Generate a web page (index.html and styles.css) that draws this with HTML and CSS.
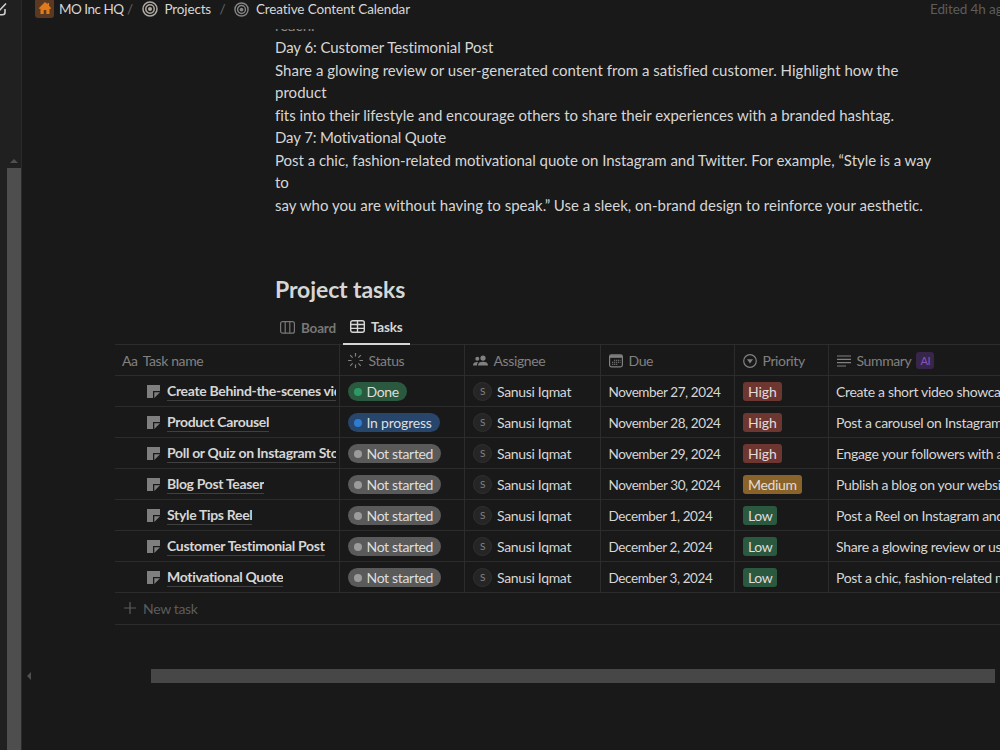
FILE: index.html
```html
<!DOCTYPE html>
<html lang="en">
<head>
<meta charset="utf-8">
<title>Creative Content Calendar</title>
<link rel="stylesheet" href="styles.css">
</head>
<body>
<svg class="defs" width="0" height="0">
  <symbol id="target" viewBox="0 0 16 16"><g fill="none" stroke="currentColor" stroke-width="1.5"><circle cx="8" cy="8" r="7"/><circle cx="8" cy="8" r="4.2"/></g><circle cx="8" cy="8" r="2" fill="currentColor"/></symbol>
  <symbol id="page" viewBox="0 0 13 13"><path fill="currentColor" d="M0 0h13v6H6v7H0zM7.3 7.300H13L7.300 13z"/></symbol>
</svg>
<div class="app">
  <aside class="sidebar">
    <svg class="compose" width="8" height="18" viewBox="0 0 8 18"><path d="M0 14.800h2.500q2.500 0 2.500-2.500V9M-1 11L6 3.500" fill="none" stroke="#d0d0d0" stroke-width="1.600"/></svg>
    <div class="scroll-v"><i class="arrow-up"></i><div class="thumb-v"></div></div>
  </aside>
  <main class="main">
    <header class="topbar">
      <span class="home"><svg width="12" height="12" viewBox="0 0 12 12"><path fill="#e07b1c" d="M6 0l2.500 2.300V1H10v2.700L12 6v.7h-1.500V12H7.300V8H4.700v4H1.500V6.700H0V6z"/></svg></span>
      <span class="crumb c1">MO Inc HQ</span><span class="slash s1">/</span>
      <svg class="tgt t1" width="16" height="16"><use href="#target"/></svg><span class="crumb c2">Projects</span><span class="slash s2">/</span>
      <svg class="tgt t2" width="15" height="15"><use href="#target"/></svg><span class="crumb c3">Creative Content Calendar</span>
      <span class="edited">Edited 4h ago</span>
    </header>
    <div class="doc">
      <div class="prose">
        <p>reach.</p>
        <p class="p1">Day 6: Customer Testimonial Post</p>
        <p class="p2">Share a glowing review or user-generated content from a satisfied customer. Highlight how the<br>product</p>
        <p class="p3">fits into their lifestyle and encourage others to share their experiences with a branded hashtag.</p>
        <p class="p4">Day 7: Motivational Quote</p>
        <p class="p5">Post a chic, fashion-related motivational quote on Instagram and Twitter. For example, “Style is a way<br>to</p>
        <p class="p6">say who you are without having to speak.” Use a sleek, on-brand design to reinforce your aesthetic.</p>
      </div>
      <h2>Project tasks</h2>
      <nav class="tabs">
        <span class="tab"><svg width="15" height="13" viewBox="0 0 15 13"><g fill="none" stroke="currentColor" stroke-width="1.200"><rect x=".6" y=".6" width="13.800" height="11.600" rx="2"/><path d="M5.200.6v11.600M9.800.6v11.600"/></g></svg>Board</span>
        <span class="tab active"><svg width="15" height="13" viewBox="0 0 15 13"><g fill="none" stroke="currentColor" stroke-width="1.400"><rect x=".7" y=".7" width="13.600" height="11.600" rx="2"/><path d="M.7 4.500h13.600M.7 8.400h13.600M7.500.7v11.600"/></g></svg>Tasks</span>
      </nav>
      <section class="table">
        <div class="row head">
          <div class="cell"><span class="aa">Aa</span><span>Task name</span></div>
          <div class="cell"><svg width="15" height="15" viewBox="0 0 15 15"><path d="M7.500 0v3.500M7.500 11.500V15M0 7.500h3.500M11.500 7.500H15M2.200 2.200l2.400 2.400M10.400 10.400l2.400 2.400M12.800 2.200l-2.400 2.400M4.600 10.400l-2.400 2.400" stroke="currentColor" stroke-width="1.200"/></svg><span>Status</span></div>
          <div class="cell"><svg width="15" height="12" viewBox="0 0 15 12"><g fill="currentColor"><circle cx="4.300" cy="3.800" r="2"/><circle cx="10" cy="3.100" r="2.600"/><path d="M5 10.500c0-2.800 2-3.800 5-3.800s5 1 5 3.800zM0 10.500c0-2.600 1.500-3.600 4.300-3.600l.9.100C4.300 8 4 9 4 10.500z"/></g></svg><span>Assignee</span></div>
          <div class="cell"><svg width="14" height="14" viewBox="0 0 14 14"><rect x=".6" y=".8" width="12.800" height="12" rx="1.800" fill="none" stroke="currentColor" stroke-width="1.200"/><path d="M1 1.200h12v2.600H1z" fill="currentColor"/><path d="M5 6.300h6.500M3 8.300h8.500M3 10.300h6" stroke="currentColor" stroke-width="1.100" stroke-dasharray="1.300 .7"/></svg><span class="due">Due</span></div>
          <div class="cell"><svg width="14" height="14" viewBox="0 0 14 14"><circle cx="7" cy="7" r="6.300" fill="none" stroke="currentColor" stroke-width="1.200"/><path d="M4 5.200h6L7 9.500z" fill="currentColor"/></svg><span>Priority</span></div>
          <div class="cell"><svg width="14" height="12" viewBox="0 0 14 12"><path d="M0 1h14M0 4.300h14M0 7.600h14M0 11h9" stroke="currentColor" stroke-width="1.200"/></svg><span>Summary</span><b class="ai">AI</b></div>
        </div>
        <div class="row"><div class="cell name"><svg width="13" height="13"><use href="#page"/></svg><span class="clip"><span class="title">Create Behind-the-scenes video</span></span></div><div class="cell"><span class="pill done"><i></i>Done</span></div><div class="cell who"><i>S</i><span>Sanusi Iqmat</span></div><div class="cell date">November 27, 2024</div><div class="cell"><span class="tag high">High</span></div><div class="cell sum">Create a short video showcasing</div></div>
        <div class="row"><div class="cell name"><svg width="13" height="13"><use href="#page"/></svg><span class="clip"><span class="title">Product Carousel</span></span></div><div class="cell"><span class="pill prog"><i></i>In progress</span></div><div class="cell who"><i>S</i><span>Sanusi Iqmat</span></div><div class="cell date">November 28, 2024</div><div class="cell"><span class="tag high">High</span></div><div class="cell sum">Post a carousel on Instagram</div></div>
        <div class="row"><div class="cell name"><svg width="13" height="13"><use href="#page"/></svg><span class="clip"><span class="title">Poll or Quiz on Instagram Stories</span></span></div><div class="cell"><span class="pill"><i></i>Not started</span></div><div class="cell who"><i>S</i><span>Sanusi Iqmat</span></div><div class="cell date">November 29, 2024</div><div class="cell"><span class="tag high">High</span></div><div class="cell sum">Engage your followers with a poll</div></div>
        <div class="row"><div class="cell name"><svg width="13" height="13"><use href="#page"/></svg><span class="clip"><span class="title">Blog Post Teaser</span></span></div><div class="cell"><span class="pill"><i></i>Not started</span></div><div class="cell who"><i>S</i><span>Sanusi Iqmat</span></div><div class="cell date">November 30, 2024</div><div class="cell"><span class="tag medium">Medium</span></div><div class="cell sum">Publish a blog on your website</div></div>
        <div class="row"><div class="cell name"><svg width="13" height="13"><use href="#page"/></svg><span class="clip"><span class="title">Style Tips Reel</span></span></div><div class="cell"><span class="pill"><i></i>Not started</span></div><div class="cell who"><i>S</i><span>Sanusi Iqmat</span></div><div class="cell date">December 1, 2024</div><div class="cell"><span class="tag low">Low</span></div><div class="cell sum">Post a Reel on Instagram and</div></div>
        <div class="row"><div class="cell name"><svg width="13" height="13"><use href="#page"/></svg><span class="clip"><span class="title">Customer Testimonial Post</span></span></div><div class="cell"><span class="pill"><i></i>Not started</span></div><div class="cell who"><i>S</i><span>Sanusi Iqmat</span></div><div class="cell date">December 2, 2024</div><div class="cell"><span class="tag low">Low</span></div><div class="cell sum">Share a glowing review or user</div></div>
        <div class="row"><div class="cell name"><svg width="13" height="13"><use href="#page"/></svg><span class="clip"><span class="title">Motivational Quote</span></span></div><div class="cell"><span class="pill"><i></i>Not started</span></div><div class="cell who"><i>S</i><span>Sanusi Iqmat</span></div><div class="cell date">December 3, 2024</div><div class="cell"><span class="tag low">Low</span></div><div class="cell sum">Post a chic, fashion-related motivational</div></div>
        <div class="new"><svg width="12" height="12" viewBox="0 0 12 12"><path d="M6 0v12M0 6h12" stroke="currentColor" stroke-width="1.200"/></svg>New task</div>
      </section>
      <div class="scroll-h"><i class="arrow-left"></i><div class="thumb-h"></div></div>
    </div>
  </main>
</div>
</body>
</html>
```
FILE: styles.css
```css
* { box-sizing: border-box; }
body { margin: 0; background: #191919; color: #d6d6d6; font-family: Lato, "Open Sans", sans-serif; font-variant-ligatures: none; overflow: hidden; }
svg { flex: none; display: block; }
p, h2 { margin: 0; }
i { font-style: normal; }
.defs { position: absolute; }
.app { display: flex; width: 1000px; height: 750px; overflow: hidden; }

.sidebar { width: 22px; flex: none; background: #202020; border-right: 1px solid #2a2a2a; display: flex; flex-direction: column; }
.scroll-v { margin-top: 140px; flex: 1; display: flex; flex-direction: column; align-items: flex-end; }
.arrow-up { margin: 1px 3px 5px 0; border: 4px solid transparent; border-top: 0; border-bottom-color: #505050; }
.thumb-v { width: 14px; flex: 1; background: #4e4e4e; }

.main { flex: 1; min-width: 0; display: flex; flex-direction: column; }
.topbar { height: 29px; flex: none; display: flex; align-items: center; padding: 0 0 11px 13px; font-size: 13.500px; letter-spacing: -0.2px; white-space: nowrap; }
.home { width: 19px; height: 20px; margin-top: -2px; border-radius: 3px; background: #5a3922; display: grid; place-items: center; }
.crumb { line-height: 20px; }
.c1 { margin-left: 5px; width: 68px; letter-spacing: -0.5px; }
.c2 { margin-left: 7px; width: 55px; letter-spacing: -0.15px; }
.c3 { margin-left: 7px; letter-spacing: -0.13px; }
.slash { color: #666; width: 14.500px; }
.tgt { color: #b0aaa2; }
.t2 { color: #858585; }
.edited { margin-left: auto; width: 70px; color: #5c5c5c; letter-spacing: -0.1px; }

.doc { flex: 1; overflow: hidden; }
.prose { margin: -15.500px 0 0 253px; font-size: 15px; line-height: 22.5px; white-space: nowrap; }
.prose p:first-child { clip-path: inset(15.500px 0 0 0); color: #8c8c8c; }
.p1 { letter-spacing: -0.07px; }
.p2 { letter-spacing: 0.03px; }
.p3 { letter-spacing: -0.01px; }
.p4 { letter-spacing: -0.14px; }
.p5 { letter-spacing: -0.035px; }
.p6 { letter-spacing: 0.02px; }
h2 { margin: 56.500px 0 0 253px; font-size: 23px; line-height: 32px; font-weight: 700; letter-spacing: -0.1px; }
.tabs { display: flex; height: 34px; margin: 5px 0 0 251px; }
.tab { display: flex; align-items: center; gap: 6px; height: 35px; padding: 1px 7px 0; font-size: 13.500px; font-weight: 700; letter-spacing: -0.2px; color: #777; }
.tab.active { color: #d6d6d6; border-bottom: 2px solid #d6d6d6; padding-right: 8px; }

.table { margin-left: 93px; border-top: 1px solid #2c2c2c; font-size: 14px; letter-spacing: -0.33px; }
.row { display: grid; grid-template-columns: 224px 125px 136px 134px 94px 1fr; height: 31px; border-bottom: 1px solid #2c2c2c; }
.cell { display: flex; align-items: center; padding-top: 2px; padding-left: 8px; white-space: nowrap; overflow: hidden; min-width: 0; }
.cell + .cell { border-left: 1px solid #2c2c2c; }
.head { color: #818181; }
.head .cell { gap: 6px; padding-left: 7.500px; letter-spacing: -0.38px; }
.head .cell:first-child { gap: 5px; padding-left: 7px; }
.ai { padding: 0 4px; margin-left: -1px; border-radius: 3px; background: #38264a; color: #8754ba; font-size: 11px; line-height: 17px; font-weight: 400; }
.cell.name { padding-left: 32px; padding-right: 3px; gap: 7px; color: #7f7f7f; }
.name svg { margin-top: -1px; }
.clip { overflow: hidden; min-width: 0; }
.title { border-bottom: 1px solid #404040; color: #d6d6d6; font-weight: 700; line-height: 18px; display: inline-block; letter-spacing: -0.32px; }
.pill { display: flex; align-items: center; gap: 4.500px; height: 19px; padding: 0 8px 0 6px; border-radius: 10px; background: #5a5a5a; color: #dedede; }
.pill i { width: 8px; height: 8px; border-radius: 50%; background: #9b9b9b; }
.pill.done { background: #2b593f; }
.pill.done i { background: #2d9964; }
.pill.prog { background: #28456c; letter-spacing: -0.2px; }
.pill.prog i { background: #2e7cd1; }
.who i { width: 19px; height: 19px; margin-right: 5px; border: 1px solid #303030; border-radius: 50%; background: #252525; color: #838383; font-size: 10px; line-height: 17px; text-align: center; }
.date { font-size: 13.500px; letter-spacing: -0.4px; padding-left: 7.500px; }
.sum { padding-left: 7px; }
.tag { height: 19px; padding: 0 5px; border-radius: 3px; line-height: 19px; color: #e2dcda; letter-spacing: -0.35px; }
.high { background: #6e3630; letter-spacing: -0.1px; }
.medium { background: #89632a; }
.low { background: #2b593f; }
.new { display: flex; align-items: center; gap: 7px; height: 32px; padding-left: 9px; color: #5c5c5c; border-bottom: 1px solid #2c2c2c; }

.scroll-h { display: flex; align-items: center; margin-top: 44px; padding-left: 5px; }
.arrow-left { border: 4px solid transparent; border-left: 0; border-right-color: #505050; }
.thumb-h { width: 844px; height: 14px; margin-left: 120px; background: #474747; }
```
